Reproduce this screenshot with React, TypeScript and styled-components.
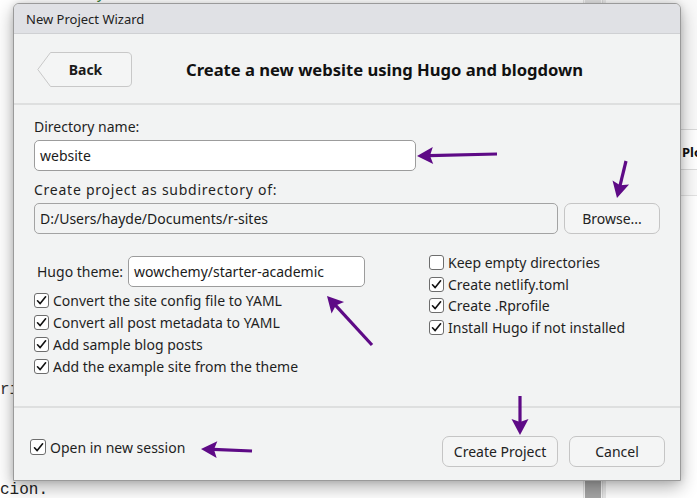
import React from "react";
import styled, { createGlobalStyle } from "styled-components";

const Global = createGlobalStyle`
  html, body { margin: 0; padding: 0; }
  body { width: 697px; height: 498px; overflow: hidden; font-family: "Noto Sans", "Open Sans", sans-serif; }
  * { box-sizing: border-box; }
`;

const Desktop = styled.div`
  position: relative;
  width: 697px;
  height: 498px;
  overflow: hidden;
  display: flex;
  background: #ffffff;
`;

const Editor = styled.div`
  width: 603px;
  flex: none;
  display: flex;
  background: #ffffff;
`;

const Code = styled.div`
  flex: 1;
  position: relative;
  font-family: "Liberation Mono", "DejaVu Sans Mono", monospace;
  font-size: 16px;
  color: #222;
`;

const CodeLine = styled.div<{ $top: number; $color?: string }>`
  position: absolute;
  left: 0;
  top: ${(p) => p.$top}px;
  white-space: pre;
  line-height: 20px;
  color: ${(p) => p.$color || "#222"};
`;

const ScrollTrack = styled.div`
  width: 20px;
  display: flex;
  flex-direction: column;
  justify-content: space-between;
  background: #f7f7f7;
  border-left: 1px solid #e4e4e4;
  border-right: 1px solid #d8d8d8;
`;

const ScrollThumb = styled.div<{ $h: number; $light?: boolean }>`
  height: ${(p) => p.$h}px;
  margin: 0 1px;
  background: ${(p) => (p.$light ? "#e2e2e2" : "#a6a6a6")};
`;

const RightPane = styled.div`
  flex: 1;
  min-width: 0;
  display: flex;
  flex-direction: column;
  background: #ffffff;
  border-left: 3px solid #e8e8e8;
`;

const PaneTop = styled.div`
  height: 130px;
  background: #f9f9f9;
  border-bottom: 1px solid #dadada;
`;

const PaneTabs = styled.div`
  height: 40px;
  display: flex;
  align-items: center;
  padding: 4px 0 0 76px;
  font: 700 13px "Noto Sans", sans-serif;
  color: #111;
  white-space: nowrap;
  border-bottom: 1px solid #dcdcdc;
`;

const PaneTool = styled.div`
  height: 26px;
  border-bottom: 1px solid #e2e2e2;
  background: #fafafa;
`;

const Dialog = styled.div`
  position: absolute;
  left: 13px;
  top: 3px;
  width: 668px;
  height: 478px;
  display: flex;
  flex-direction: column;
  background: #f2f3f3;
  border: 1px solid #9a9a9a;
  border-radius: 6px 6px 0 0;
  box-shadow: 0 6px 18px rgba(0, 0, 0, 0.32), 0 0 6px rgba(0, 0, 0, 0.12);
  overflow: hidden;
  color: #1b1b1b;
  font-family: "Noto Sans", "Open Sans", sans-serif;
`;

const TitleBar = styled.div`
  height: 30px;
  flex: none;
  display: flex;
  align-items: center;
  padding-left: 12px;
  background: #e0e1e5;
  border-bottom: 1px solid #cfd0d3;
  font-size: 13px;
  color: #222;
`;

const Header = styled.div`
  height: 71px;
  flex: none;
  display: flex;
  align-items: center;
  padding-left: 23px;
  border-bottom: 2px solid #dedfdf;
`;

const BackButton = styled.button`
  position: relative;
  width: 95px;
  height: 35px;
  margin-top: 2px;
  border: none;
  background: transparent;
  padding: 0 0 0 2px;
  font: 700 14px "Noto Sans", sans-serif;
  color: #1b1b1b;
  cursor: pointer;
  svg { position: absolute; left: 0; top: 0; }
  span { position: relative; }
`;

const Heading = styled.h1`
  margin: 2px 0 0 54px;
  font: 700 16.6px "Noto Sans", sans-serif;
  color: #111;
`;

const Main = styled.div`
  flex: 1;
  padding: 12px 0 0 20px;
  display: flex;
  flex-direction: column;
`;

const Label = styled.div<{ $spread?: boolean }>`
  font-size: 14px;
  line-height: 20px;
  color: #1f1f1f;
  letter-spacing: ${(p) => (p.$spread ? "0.75px" : "0")};
`;

const TextInput = styled.div<{ $width: number; $disabled?: boolean }>`
  width: ${(p) => p.$width}px;
  height: 31px;
  display: flex;
  align-items: center;
  padding-left: 5px;
  font-size: 14px;
  color: #1b1b1b;
  background: ${(p) => (p.$disabled ? "#f2f3f3" : "#ffffff")};
  border: 1px solid ${(p) => (p.$disabled ? "#a3a3a3" : "#9c9c9c")};
  border-radius: 5px;
  margin-top: 3px;
`;

const PathRow = styled.div`
  display: flex;
  gap: 6px;
`;

const Button = styled.button<{ $width: number }>`
  width: ${(p) => p.$width}px;
  height: 31px;
  margin-top: 3px;
  background: #f4f5f5;
  border: 1px solid #c5c5c5;
  border-radius: 7px;
  font: 400 14px "Noto Sans", sans-serif;
  color: #222;
  padding: 0;
`;

const Spacer = styled.div<{ $h: number }>`
  height: ${(p) => p.$h}px;
  flex: none;
`;

const Options = styled.div`
  display: flex;
  margin-top: 22px;
`;

const LeftCol = styled.div`
  width: 395px;
  display: flex;
  flex-direction: column;
`;

const ThemeRow = styled.div`
  display: flex;
  align-items: center;
  gap: 5px;
  padding-left: 3px;
  margin-bottom: 2px;
  ${TextInput} { margin-top: 0; }
`;

const RightCol = styled.div`
  display: flex;
  flex-direction: column;
  margin-top: -4px;
`;

const CheckRow = styled.label<{ $h: number }>`
  display: flex;
  align-items: center;
  height: ${(p) => p.$h}px;
  gap: 4px;
  font-size: 14px;
  color: #1f1f1f;
  white-space: nowrap;
`;

const Box = styled.span<{ $size: number }>`
  width: ${(p) => p.$size}px;
  height: ${(p) => p.$size}px;
  flex: none;
  display: flex;
  align-items: center;
  justify-content: center;
  background: #ffffff;
  border: 1px solid #6d6d6d;
  border-radius: 3px;
`;

const Footer = styled.div`
  height: 74px;
  flex: none;
  display: flex;
  align-items: center;
  justify-content: space-between;
  padding: 6px 15px 0 16px;
  border-top: 2px solid #dedfdf;
`;

const FooterButtons = styled.div`
  display: flex;
  gap: 11px;
  padding-top: 9px;
  ${Button} { margin-top: 0; }
`;

const Overlay = styled.svg`
  position: absolute;
  left: 0;
  top: 0;
  pointer-events: none;
`;

const Check = ({ checked, label, h = 22, size = 15 }: { checked: boolean; label: string; h?: number; size?: number }) => (
  <CheckRow $h={h}>
    <Box $size={size}>
      {checked && (
        <svg width="11" height="11" viewBox="0 0 11 11">
          <path d="M1.5 5.8 L4.2 8.6 L9.6 1.8" fill="none" stroke="#111" strokeWidth="1.6" strokeLinecap="round" strokeLinejoin="round" />
        </svg>
      )}
    </Box>
    {label}
  </CheckRow>
);

const ARROW = "#5e0a86";

const Arrow = ({ x1, y1, x2, y2 }: { x1: number; y1: number; x2: number; y2: number }) => {
  const dx = x2 - x1;
  const dy = y2 - y1;
  const len = Math.hypot(dx, dy);
  const ux = dx / len;
  const uy = dy / len;
  const hl = 16;
  const hw = 8.5;
  const bx = x2 - ux * hl;
  const by = y2 - uy * hl;
  const px = -uy;
  const py = ux;
  const head = `${x2},${y2} ${bx + px * hw},${by + py * hw} ${bx + ux * 3},${by + uy * 3} ${bx - px * hw},${by - py * hw}`;
  return (
    <g>
      <line x1={x1} y1={y1} x2={bx + ux * 4} y2={by + uy * 4} stroke={ARROW} strokeWidth="3.2" />
      <polygon points={head} fill={ARROW} />
    </g>
  );
};

export default function App() {
  return (
    <>
      <Global />
      <Desktop>
        <Editor>
          <Code>
            <CodeLine $top={-15} $color="#2e7d32">Directionmy FDW 2021</CodeLine>
            <CodeLine $top={380} $color="#333">rig</CodeLine>
            <CodeLine $top={480}>cion.</CodeLine>
          </Code>
          <ScrollTrack>
            <ScrollThumb $h={4} $light />
            <ScrollThumb $h={20} />
          </ScrollTrack>
        </Editor>
        <RightPane>
          <PaneTop />
          <PaneTabs>Plots</PaneTabs>
          <PaneTool />
        </RightPane>

        <Dialog>
          <TitleBar>New Project Wizard</TitleBar>
          <Header>
            <BackButton>
              <svg width="95" height="35" viewBox="0 0 95 35">
                <path d="M13.5 0.5 H90 Q94.5 0.5 94.5 5 V30 Q94.5 34.5 90 34.5 H13.5 L0.8 17.5 Z" fill="#f4f5f5" stroke="#c8c8c8" strokeWidth="1" />
              </svg>
              <span>Back</span>
            </BackButton>
            <Heading>Create a new website using Hugo and blogdown</Heading>
          </Header>
          <Main>
            <Label>Directory name:</Label>
            <TextInput $width={382}>website</TextInput>
            <Spacer $h={9} />
            <Label $spread>Create project as subdirectory of:</Label>
            <PathRow>
              <TextInput $width={524} $disabled>D:/Users/hayde/Documents/r-sites</TextInput>
              <Button $width={96}>Browse...</Button>
            </PathRow>
            <Options>
              <LeftCol>
                <ThemeRow>
                  <Label>Hugo theme:</Label>
                  <TextInput $width={237}>wowchemy/starter-academic</TextInput>
                </ThemeRow>
                <Check checked label="Convert the site config file to YAML" />
                <Check checked label="Convert all post metadata to YAML" />
                <Check checked label="Add sample blog posts" />
                <Check checked label="Add the example site from the theme" />
              </LeftCol>
              <RightCol>
                <Check checked={false} label="Keep empty directories" h={21.5} />
                <Check checked label="Create netlify.toml" h={21.5} />
                <Check checked label="Create .Rprofile" h={21.5} />
                <Check checked label="Install Hugo if not installed" h={21.5} />
              </RightCol>
            </Options>
          </Main>
          <Footer>
            <Check checked label="Open in new session" size={16} />
            <FooterButtons>
              <Button $width={116}>Create Project</Button>
              <Button $width={96}>Cancel</Button>
            </FooterButtons>
          </Footer>
        </Dialog>

        <Overlay width="697" height="498">
          <Arrow x1={497} y1={154} x2={417} y2={156} />
          <Arrow x1={626} y1={161} x2={617} y2={198} />
          <Arrow x1={372} y1={345} x2={327} y2={296} />
          <Arrow x1={252} y1={451} x2={201} y2={449} />
          <Arrow x1={520} y1={396} x2={520} y2={435} />
        </Overlay>
      </Desktop>
    </>
  );
}
